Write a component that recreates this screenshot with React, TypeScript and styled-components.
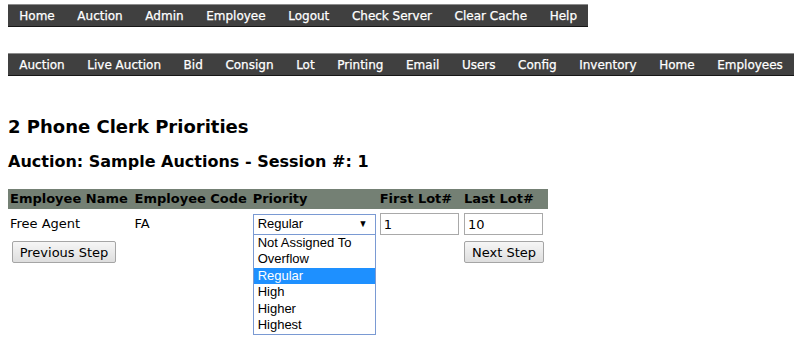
import * as React from "react"
import styled, { createGlobalStyle } from "styled-components"

const GlobalStyle = createGlobalStyle`
	html, body {
		min-height: 100%;
	}
	body {
		margin: 0;
		padding: 4px 8px;
		background: #fff;
		color: #000;
		font-family: "DejaVu Sans", Verdana, sans-serif;
		font-size: 13px;
	}
	#root {
		min-height: 355px;
	}
`

const NavWrap = styled.nav`
	display: flex;
	flex-direction: column;
	align-items: flex-start;
`

const NavBar = styled.ul`
	display: inline-flex;
	margin: 0;
	padding: 0;
	list-style: none;
	background: #404040;
	border-top: 1px solid #8c8c8c;
	border-bottom: 1px solid #161616;
	& + & {
		margin-top: 26px;
	}
`

const NavItem = styled.li`
	padding: 1px 11.3px 0;
	line-height: 20px;
	font-size: 12px;
	color: #fff;
	white-space: nowrap;
	-webkit-text-stroke: 0.25px #fff;
`

const Title = styled.h2`
	margin: 40px 0 0;
	font-size: 18px;
	line-height: 21px;
	font-weight: bold;
`

const SubTitle = styled.h3`
	margin: 15px 0 0;
	font-size: 16px;
	line-height: 19px;
	font-weight: bold;
`

const Grid = styled.table`
	margin-top: 18px;
	border-collapse: collapse;
	border-spacing: 0;
	width: 540px;
`

const HeadCell = styled.th<{ $w: number }>`
	width: ${(p) => p.$w}px;
	padding: 2px 2px;
	background: #748074;
	text-align: left;
	font-size: 13px;
	line-height: 16px;
	white-space: nowrap;
	box-sizing: border-box;
`

const Cell = styled.td<{ $right?: boolean; $top?: number }>`
	padding: ${(p) => p.$top ?? 4}px 2px 4px;
	line-height: 16px;
	vertical-align: middle;
	text-align: ${(p) => (p.$right ? "right" : "left")};
	white-space: nowrap;
`

const TextBox = styled.input`
	box-sizing: border-box;
	width: 79px;
	height: 22px;
	margin: 0;
	padding: 1px 3px;
	border: 1px solid #a9a9a9;
	font-family: "DejaVu Sans", Verdana, sans-serif;
	font-size: 13px;
	color: #000;
	outline: none;
	display: block;
`

const SelectWrap = styled.div`
	position: relative;
	width: 123px;
`

const SelectBox = styled.div`
	box-sizing: border-box;
	display: flex;
	align-items: center;
	justify-content: space-between;
	height: 21px;
	padding: 0 4px;
	border: 1px solid #7a9ad3;
	font-family: "Liberation Sans", Arial, sans-serif;
	font-size: 13px;
	background: #fff;
`

const Arrow = styled.span`
	font-size: 10px;
	margin-right: 3px;
	transform: scaleX(0.9);
`

const OptionList = styled.ul`
	position: absolute;
	left: 0;
	top: 21px;
	width: 123px;
	box-sizing: border-box;
	margin: 0;
	padding: 0;
	list-style: none;
	background: #fff;
	border: 1px solid #7a9ad3;
	border-top: none;
	z-index: 2;
`

const OptionItem = styled.li<{ $active?: boolean }>`
	height: 16.5px;
	line-height: 16.5px;
	padding: 0 4px;
	font-family: "Liberation Sans", Arial, sans-serif;
	font-size: 13px;
	color: ${(p) => (p.$active ? "#fff" : "#000")};
	background: ${(p) => (p.$active ? "#1e90ff" : "transparent")};
`

const StepButton = styled.button<{ $w: number; $side: "left" | "right" }>`
	box-sizing: border-box;
	width: ${(p) => p.$w}px;
	height: 22px;
	margin: 0;
	margin-${(p) => p.$side}: 2px;
	padding: 0 6px;
	border: 1px solid #a5a5a5;
	border-radius: 2px;
	background: linear-gradient(#f6f6f6, #dedede);
	font-family: "DejaVu Sans", Verdana, sans-serif;
	font-size: 13px;
	color: #000;
`

const topLinks = ["Home", "Auction", "Admin", "Employee", "Logout", "Check Server", "Clear Cache", "Help"]
const subLinks = ["Auction", "Live Auction", "Bid", "Consign", "Lot", "Printing", "Email", "Users", "Config", "Inventory", "Home", "Employees"]
const priorities = ["Not Assigned To", "Overflow", "Regular", "High", "Higher", "Highest"]

export default function App() {
	return (
		<>
			<GlobalStyle />
			<NavWrap>
				<NavBar>
					{topLinks.map((l) => (
						<NavItem key={l}>{l}</NavItem>
					))}
				</NavBar>
				<NavBar>
					{subLinks.map((l, i) => (
						<NavItem key={i}>{l}</NavItem>
					))}
				</NavBar>
			</NavWrap>
			<Title>2 Phone Clerk Priorities</Title>
			<SubTitle>Auction: Sample Auctions - Session #: 1</SubTitle>
			<Grid>
				<thead>
					<tr>
						<HeadCell $w={126}>Employee Name</HeadCell>
						<HeadCell $w={119}>Employee Code</HeadCell>
						<HeadCell $w={127}>Priority</HeadCell>
						<HeadCell $w={85}>First Lot#</HeadCell>
						<HeadCell $w={83}>Last Lot#</HeadCell>
					</tr>
				</thead>
				<tbody>
					<tr>
						<Cell>Free Agent</Cell>
						<Cell>FA</Cell>
						<Cell>
							<SelectWrap>
								<SelectBox>
									<span>Regular</span>
									<Arrow>▼</Arrow>
								</SelectBox>
								<OptionList>
									{priorities.map((p) => (
										<OptionItem key={p} $active={p === "Regular"}>
											{p}
										</OptionItem>
									))}
								</OptionList>
							</SelectWrap>
						</Cell>
						<Cell>
							<TextBox defaultValue="1" />
						</Cell>
						<Cell>
							<TextBox defaultValue="10" />
						</Cell>
					</tr>
					<tr>
						<Cell $top={2}>
							<StepButton $w={104} $side="left">Previous Step</StepButton>
						</Cell>
						<Cell $top={2} />
						<Cell $top={2} />
						<Cell $top={2} />
						<Cell $top={2} $right>
							<StepButton $w={80} $side="right">Next Step</StepButton>
						</Cell>
					</tr>
				</tbody>
			</Grid>
		</>
	)
}
